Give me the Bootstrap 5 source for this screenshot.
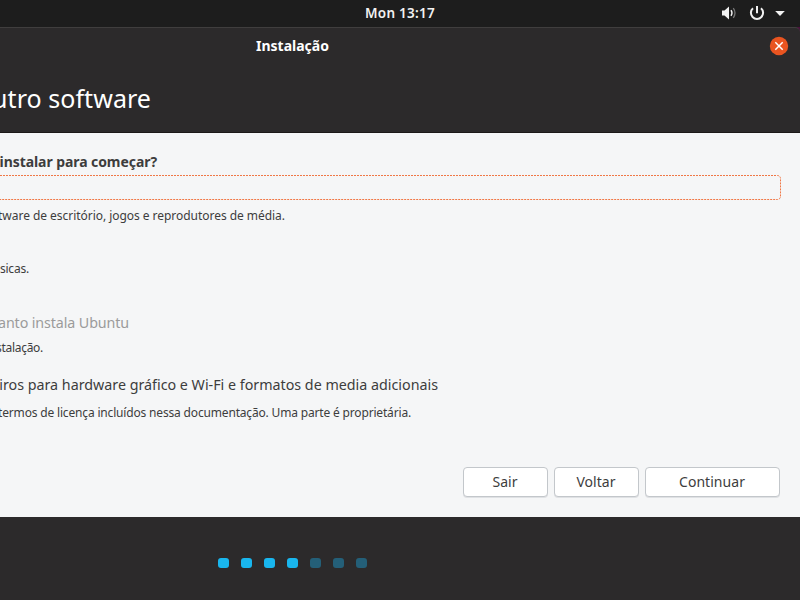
<!DOCTYPE html>
<html lang="pt">
<head>
<meta charset="utf-8">
<meta name="viewport" content="width=device-width, initial-scale=1">
<title>Instalação</title>
<link href="https://cdn.jsdelivr.net/npm/bootstrap@5.3.0/dist/css/bootstrap.min.css" rel="stylesheet">
<style>
body{font-family:"Noto Sans","Open Sans",sans-serif;font-size:14px;color:#3d3d3d;background:#4c0f3d;height:600px;overflow:hidden}
.topbar{height:27px;background:#1d1d1d;color:#f2f2f2}
.clock{width:800px;line-height:27px;font-weight:600;font-size:13.5px;letter-spacing:.25px}
.tray{right:15px;top:0;height:27px}
.window{height:573px;border-top:1px solid #403e3e;background:#2c2a2b;border-top-right-radius:5px}
.titlebar{height:36px;color:#fff;padding-right:11px}
.titlebar-text{width:585px;line-height:36px;font-weight:700;font-size:14px}
.heading-area{height:69px;border-bottom:1px solid #1c1919;color:#fff}
.pane{height:384px;background:#f5f6f7}
.line{display:flex;justify-content:flex-end;white-space:nowrap}
.h-title{width:151px;height:68px;line-height:68px;font-size:25px;letter-spacing:.05px}
.question{width:157px;height:42px;line-height:20px;padding-top:19px;font-weight:700;font-size:14px;letter-spacing:-.07px}
.focus-row{display:block}
.sub{font-size:12px;line-height:18px;height:18px}
.sub-apps{width:285px;margin-top:7px;letter-spacing:-.04px}
.sub-min{width:29px;margin-top:35px;letter-spacing:-.2px}
.sub-inst{width:43px;margin-top:6px;letter-spacing:-.3px}
.sub-lic{width:411px;margin-top:9px;letter-spacing:-.17px}
.opt{font-size:14.3px;line-height:20px;height:20px}
.opt-upd{width:129px;margin-top:35px;color:#9b9b9b;letter-spacing:-.12px}
.opt-drv{width:438px;margin-top:18px;letter-spacing:-.01px}
.dlg-btn{height:30px;width:85px;padding:0;background:#fff;border:1px solid #c3c7cb;border-radius:4px;color:#3d3d3d;font-size:14px;line-height:28px;box-shadow:0 1px 0 #dfe1e4;text-indent:-1px;letter-spacing:.05px}
.dlg-btn.wide{width:135px}
.actions{padding-right:20px;margin-top:45px;gap:6px}
.dots{gap:12px;padding:41px 0 0 218px}
.step{width:11px;height:10px;border-radius:3px;background:#245f78}
.step.done{background:#19b6ee}
</style>
<script src="https://cdn.jsdelivr.net/npm/bootstrap@5.3.0/dist/js/bootstrap.bundle.min.js"></script>
</head>
<body>
<header class="topbar position-relative">
  <div class="clock text-center">Mon 13:17</div>
  <div class="tray position-absolute d-flex align-items-center">
    <svg width="64" height="27" viewBox="721 0 64 27" fill="none">
      <path d="M722 10.5h2.5l4.5-4v13l-4.5-4H722z" fill="#f2f2f2"/>
      <path d="M731 10.2q2 2.8 0 5.6" stroke="#f2f2f2" stroke-width="1.4"/>
      <path d="M733.3 8.2q3.4 4.8 0 9.6" stroke="#777" stroke-width="1.3"/>
      <path d="M753 8.2a6.1 6.1 0 1 0 8 0" stroke="#f2f2f2" stroke-width="2"/>
      <path d="M757 6v7.3" stroke="#f2f2f2" stroke-width="2"/>
      <path d="M775.2 11h9.6l-4.8 5z" fill="#f2f2f2"/>
    </svg>
  </div>
</header>
<main class="window">
  <div class="titlebar d-flex align-items-center justify-content-between">
    <div class="titlebar-text text-center">Instalação</div>
    <svg width="20" height="36" viewBox="0 0 20 36" fill="none"><circle cx="10" cy="18" r="9.2" fill="#e95420"/><path d="M6.3 14.3l7.4 7.4M13.7 14.3l-7.4 7.4" stroke="#fff" stroke-width="1.5"/></svg>
  </div>
  <div class="heading-area"><div class="line h-title">utro software</div></div>
  <section class="pane">
    <div class="line question">instalar para começar?</div>
    <svg class="focus-row" width="782" height="25" fill="none"><path d="M0 .5H777.5a3 3 0 0 1 3 3V21.500a3 3 0 0 1-3 3H0" stroke="#f07746" stroke-dasharray="2 1"/></svg>
    <div class="line sub sub-apps">tware de escritório, jogos e reprodutores de média.</div>
    <div class="line sub sub-min">ásicas.</div>
    <div class="line opt opt-upd">anto instala Ubuntu</div>
    <div class="line sub sub-inst">stalação.</div>
    <div class="line opt opt-drv">iros para hardware gráfico e Wi-Fi e formatos de media adicionais</div>
    <div class="line sub sub-lic">termos de licença incluídos nessa documentação. Uma parte é proprietária.</div>
    <div class="actions d-flex justify-content-end">
      <button class="btn dlg-btn">Sair</button><button class="btn dlg-btn">Voltar</button><button class="btn dlg-btn wide">Continuar</button>
    </div>
  </section>
  <footer class="dots d-flex">
    <span class="step done"></span><span class="step done"></span><span class="step done"></span><span class="step done"></span><span class="step"></span><span class="step"></span><span class="step"></span>
  </footer>
</main>
</body>
</html>
